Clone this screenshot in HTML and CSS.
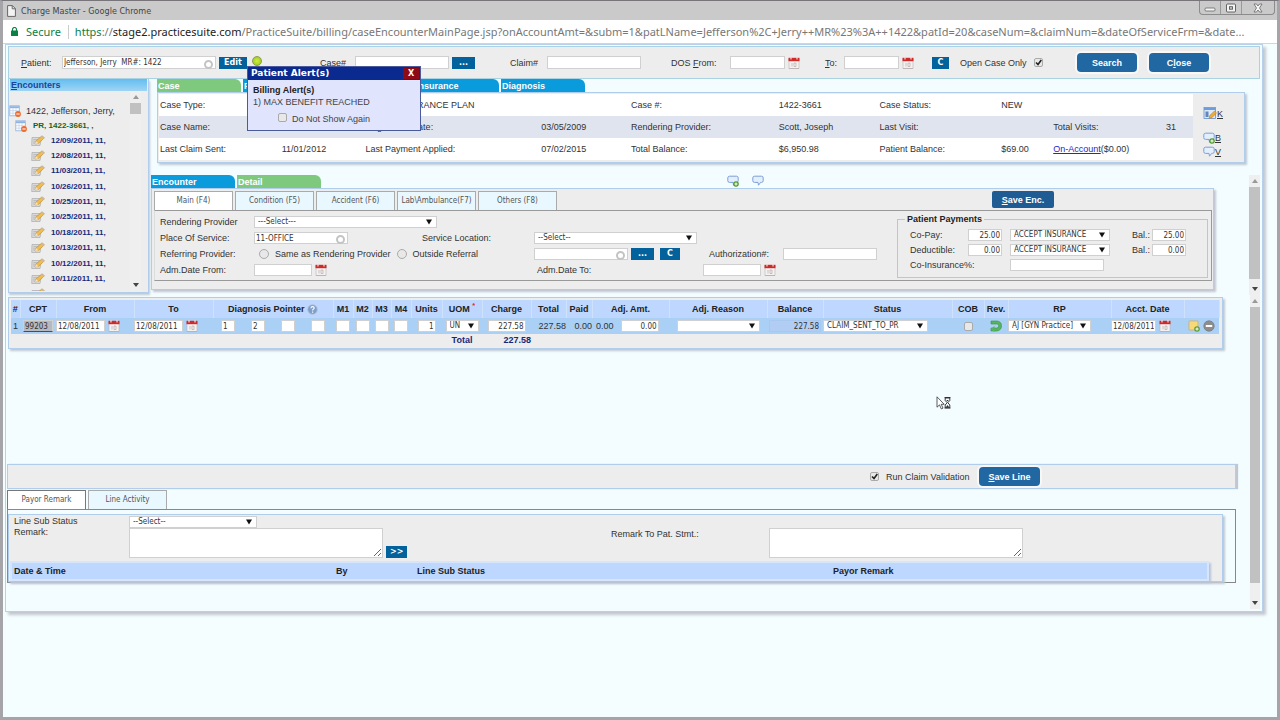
FILE: index.html
```html
<!DOCTYPE html>
<html lang="en">
<head>
  <meta charset="UTF-8">
  <title>Charge Master</title>
  <meta name="viewport" content="width=device-width, initial-scale=1.0">
  <link rel="stylesheet" href="styles.css">
</head>
<body>
  <!-- shared icons -->
  <svg class="defs" width="0" height="0" aria-hidden="true">
    <symbol id="cal" viewBox="0 0 12 12">
      <rect x="1" y="2" width="10" height="9.5" fill="#f4f1f1" stroke="#b9b3b3" stroke-width=".6"/>
      <rect x=".5" y=".8" width="11" height="3.4" fill="#cf2a2a"/>
      <path d="M3 0v2.4M9 0v2.4" stroke="#f3dede" stroke-width="1.2"/>
      <path d="M4 6v3.5M6 6h2v3.5H6zM1 11.5h10" stroke="#b7a9a9" stroke-width=".7" fill="none"/>
    </symbol>
    <symbol id="note" viewBox="0 0 14 12">
      <path d="M1 2.5h9.5L9 10.5H.7z" fill="#d9d9d9" stroke="#aaa" stroke-width=".7"/>
      <path d="M2.5 4.5h5M2.2 6.2h4M2 8h3" stroke="#aaa" stroke-width=".6"/>
      <path d="M4 9l1-3L11 .8l2.4 2L7.4 8.4z" fill="#f0bd4e" stroke="#b98b35" stroke-width=".6"/>
      <path d="M4 9l1-3 2.4 2.4z" fill="#f8e3bc"/>
      <path d="M11 .8l2.4 2-.9.9-2.5-2z" fill="#c9b9ae"/>
    </symbol>
    <symbol id="sheet" viewBox="0 0 12 12">
      <rect x=".8" y=".8" width="9.5" height="10" fill="#fdfeff" stroke="#8fb0da" stroke-width=".8"/>
      <path d="M1 2.2h9" stroke="#8db3e6" stroke-width="2"/>
      <path d="M4 3v8M7 3v8M1 5.6h9M1 8.2h9" stroke="#b8cbe4" stroke-width=".6"/>
      <circle cx="9" cy="9" r="2.9" fill="#ee6b2d"/>
      <path d="M7.4 9h3.2" stroke="#fff" stroke-width="1.1"/>
    </symbol>
    <symbol id="bubble" viewBox="0 0 12 12">
      <path d="M2.5 1.2h7q1.7 0 1.7 1.7v2.8q0 1.7-1.7 1.7H8.600L6.500 10.200 6 7.400H2.500Q.8 7.400.8 5.700V2.900q0-1.700 1.700-1.700z" fill="#e3effc" stroke="#7d9fd6" stroke-width="1"/>
    </symbol>
    <symbol id="bubble-add" viewBox="0 0 12 12">
      <use href="#bubble"/>
      <circle cx="9" cy="9" r="2.8" fill="#4f9a2c"/>
      <path d="M9 7.4v3.2M7.4 9h3.2" stroke="#fff" stroke-width="1"/>
    </symbol>
    <symbol id="edit-sheet" viewBox="0 0 14 14">
      <rect x="1" y="1.5" width="11.5" height="11" fill="#dbe9fa" stroke="#668fc7" stroke-width=".8"/>
      <path d="M1 3h11.5" stroke="#6f9ddb" stroke-width="2"/>
      <path d="M2.5 5.5h3v5.5h-3z" fill="#6086be"/>
      <path d="M6 12.5l.8-3L11.500 5l2 2-4.600 4.700z" fill="#f1ac3b" stroke="#a87321" stroke-width=".5"/>
    </symbol>
  </svg>

  <header class="titlebar">
    <svg width="9" height="12" viewBox="0 0 9 12"><path d="M.6.6h4.8l3 3v7.8H.6z" fill="#f3f3f3" stroke="#666"/><path d="M5.2.6v3.2h3.2" fill="none" stroke="#666"/></svg>
    <span>Charge Master - Google Chrome</span>
    <div class="win-btns">
      <button aria-label="Minimize"><svg width="12" height="10" viewBox="0 0 12 10"><rect x="1" y="5" width="10" height="3" rx="1" fill="#f5f5f5" stroke="#666" stroke-width=".8"/></svg></button>
      <button aria-label="Maximize"><svg width="12" height="10" viewBox="0 0 12 10"><rect x="1.5" y="1" width="9" height="8" rx="1" fill="#f5f5f5" stroke="#555" stroke-width=".9"/><rect x="4.5" y="3.7" width="3" height="2.5" fill="#ccc" stroke="#555" stroke-width=".9"/></svg></button>
      <button aria-label="Close window"><svg width="12" height="10" viewBox="0 0 12 10"><path d="M2 1h2.500L6 3l1.500-2H10L7.500 5 10 9H7.500L6 7 4.500 9H2l2.500-4z" fill="#f5f5f5" stroke="#666" stroke-width=".8"/></svg></button>
    </div>
  </header>

  <div class="address">
    <svg width="7" height="9" viewBox="0 0 7 9"><rect x="0" y="3.500" width="7" height="5.500" rx=".5" fill="#0b8043"/><path d="M1.500 4V2.500a2 2 0 0 1 4 0V4" fill="none" stroke="#0b8043" stroke-width="1.200"/></svg>
    <span class="secure">Secure</span>
    <span class="url"><i class="https">https</i>://<b>stage2.practicesuite.com</b>/PracticeSuite/billing/caseEncounterMainPage.jsp?onAccountAmt=&amp;subm=1&amp;patLName=Jefferson%2C+Jerry++MR%23%3A++1422&amp;patId=20&amp;caseNum=&amp;claimNum=&amp;dateOfServiceFrm=&amp;date...</span>
  </div>

  <main class="app">
    <form class="topbar">
      <div class="group">
        <label class="w38" for="patient"><u>P</u>atient:</label>
        <span class="lookup"><input id="patient" class="w154" value="Jefferson, Jerry  MR#: 1422"></span>
        <button type="button" class="mini">Edit</button>
        <span class="dot"></span>
      </div>
      <div class="group">
        <label class="w32" for="caseno">Case#</label>
        <input id="caseno" class="w94">
        <button type="button" class="mini">...</button>
      </div>
      <div class="group">
        <label class="w34" for="claimno">Claim#</label>
        <input id="claimno" class="w94">
      </div>
      <div class="group">
        <label class="w56" for="dosfrom">DOS <u>F</u>rom:</label>
        <input id="dosfrom" class="w55">
        <svg class="cal"><use href="#cal"/></svg>
      </div>
      <div class="group">
        <label class="w16" for="dosto"><u>T</u>o:</label>
        <input id="dosto" class="w55">
        <svg class="cal"><use href="#cal"/></svg>
      </div>
      <div class="group">
        <button type="button" class="mini short">C</button>
        <label class="open-case" for="opencase">Open Case Only</label>
        <input type="checkbox" id="opencase" checked>
      </div>
      <div class="group buttons">
        <button type="button" class="btn">Search</button>
        <button type="button" class="btn">C<u>l</u>ose</button>
      </div>
    </form>

    <div class="workspace">
      <aside class="sidebar">
        <h2><u>E</u>ncounters</h2>
        <div class="tree-wrap">
          <div class="tree">
            <div class="patient"><svg class="sheet"><use href="#sheet"/></svg>1422, Jefferson, Jerry,</div>
            <div class="case"><svg class="sheet"><use href="#sheet"/></svg>PR, 1422-3661, ,</div>
            <ul>
              <li><svg><use href="#note"/></svg><a href="#">12/09/2011, 11,</a></li>
              <li><svg><use href="#note"/></svg><a href="#">12/08/2011, 11,</a></li>
              <li><svg><use href="#note"/></svg><a href="#">11/03/2011, 11,</a></li>
              <li><svg><use href="#note"/></svg><a href="#">10/26/2011, 11,</a></li>
              <li><svg><use href="#note"/></svg><a href="#">10/25/2011, 11,</a></li>
              <li><svg><use href="#note"/></svg><a href="#">10/25/2011, 11,</a></li>
              <li><svg><use href="#note"/></svg><a href="#">10/18/2011, 11,</a></li>
              <li><svg><use href="#note"/></svg><a href="#">10/13/2011, 11,</a></li>
              <li><svg><use href="#note"/></svg><a href="#">10/12/2011, 11,</a></li>
              <li><svg><use href="#note"/></svg><a href="#">10/11/2011, 11,</a></li>
              <li><svg><use href="#note"/></svg></li>
            </ul>
          </div>
          <div class="scroll"><i class="up"></i><i class="thumb"></i><i class="down"></i></div>
        </div>
      </aside>

      <div class="main">
        <section class="case-zone">
          <nav class="tabs">
            <a href="#" class="on">Case</a>
            <a href="#">Patient</a>
            <a href="#">Guarantor</a>
            <a href="#">Insurance</a>
            <a href="#">Diagnosis</a>
          </nav>
          <div class="panel case-panel">
            <table class="case-table">
              <colgroup><col class="w122"><col class="w84"><col class="w176"><col class="w90"><col class="w148"><col class="w101"><col class="w122"><col class="w52"><col class="w113"><col class="w28"></colgroup>
              <tr><th>Case Type:</th><td></td><td colspan="2" class="plan">INSURANCE PLAN</td><th>Case #:</th><td>1422-3661</td><th>Case Status:</th><td>NEW</td><th></th><td></td></tr>
              <tr><th>Case Name:</th><td></td><th>Registered Date:</th><td>03/05/2009</td><th>Rendering Provider:</th><td>Scott, Joseph</td><th>Last Visit:</th><td></td><th>Total Visits:</th><td>31</td></tr>
              <tr><th>Last Claim Sent:</th><td>11/01/2012</td><th>Last Payment Applied:</th><td>07/02/2015</td><th>Total Balance:</th><td>$6,950.98</td><th>Patient Balance:</th><td>$69.00</td><td colspan="2"><a href="#">On-Account</a>($0.00)</td></tr>
            </table>
            <div class="case-icons">
              <a href="#"><svg width="14" height="14"><use href="#edit-sheet"/></svg><u>K</u></a>
              <a href="#"><svg width="12" height="12"><use href="#bubble-add"/></svg><u>B</u></a>
              <a href="#"><svg width="12" height="12"><use href="#bubble"/></svg><u>V</u></a>
            </div>
          </div>
        </section>

        <section class="enc-zone">
          <div class="enc-body">
            <nav class="tabs">
              <a href="#">Encounter</a>
              <a href="#" class="on">Detail</a>
              <span class="tab-icons">
                <svg width="12" height="12"><use href="#bubble-add"/></svg>
                <svg width="12" height="12"><use href="#bubble"/></svg>
              </span>
            </nav>
            <div class="panel enc-panel">
              <div class="enc-head">
                <nav class="subtabs">
                  <a href="#" class="on">Main (F4)</a>
                  <a href="#">Condition (F5)</a>
                  <a href="#">Accident (F6)</a>
                  <a href="#">Lab\Ambulance(F7)</a>
                  <a href="#">Others (F8)</a>
                </nav>
                <button type="button" class="btn save-enc"><u>S</u>ave Enc.</button>
              </div>
              <form class="enc-form">
                <div class="fields">
                  <label for="rendprov">Rendering Provider</label>
                  <select id="rendprov" class="w183 wide"><option>---Select---</option></select>

                  <label for="pos">Place Of Service:</label>
                  <span class="lookup"><input id="pos" class="w94" value="11-OFFICE"></span>
                  <label for="svcloc">Service Location:</label>
                  <select id="svcloc" class="w163 wide"><option>--Select--</option></select>

                  <span>Referring Provider:</span>
                  <span class="radios">
                    <input type="radio" name="ref" id="refsame"><label for="refsame">Same as Rendering Provider</label>
                    <input type="radio" name="ref" id="refout"><label for="refout">Outside Referral</label>
                  </span>
                  <span class="group">
                    <span class="lookup"><input class="w94" aria-label="Referring provider name"></span>
                    <button type="button" class="mini">...</button>
                    <button type="button" class="mini short">C</button>
                  </span>
                  <label for="auth">Authorization#:</label>
                  <input id="auth" class="w94">

                  <label for="admfrom">Adm.Date From:</label>
                  <span class="group"><input id="admfrom" class="w58"><svg class="cal"><use href="#cal"/></svg></span>
                  <span class="group adm-to"><label for="admto">Adm.Date To:</label><input id="admto" class="w58"><svg class="cal"><use href="#cal"/></svg></span>
                </div>
                <fieldset>
                  <legend>Patient Payments</legend>
                  <div class="payments">
                    <label for="copay">Co-Pay:</label>
                    <input id="copay" class="num w34" value="25.00">
                    <select class="w100" aria-label="Co-pay payer"><option>ACCEPT INSURANCE</option></select>
                    <label for="copaybal">Bal.:</label>
                    <input id="copaybal" class="num w34" value="25.00">
                    <label for="deduct">Deductible:</label>
                    <input id="deduct" class="num w34" value="0.00">
                    <select class="w100" aria-label="Deductible payer"><option>ACCEPT INSURANCE</option></select>
                    <label for="dedbal">Bal.:</label>
                    <input id="dedbal" class="num w34" value="0.00">
                    <label for="coins" class="coins">Co-Insurance%:</label>
                    <input id="coins" class="w94">
                  </div>
                </fieldset>
              </form>
            </div>
          </div>
          <div class="scroll"><i class="up"></i><i class="thumb fill"></i><i class="down"></i></div>
        </section>
      </div>
    </div>

    <div class="lower">
      <div class="lower-body">
        <div class="panel lines-panel">
          <table class="lines">
            <colgroup><col class="w9"><col class="w36"><col class="w78"><col class="w79"><col class="w30"><col class="w30"><col class="w30"><col class="w30"><col class="w20"><col class="w19"><col class="w19"><col class="w20"><col class="w31"><col class="w40"><col class="w49"><col class="w35"><col class="w26"><col class="w77"><col class="w98"><col class="w56"><col class="w129"><col class="w32"><col class="w24"><col class="w103"><col class="w73"><col class="w35"></colgroup>
            <thead>
              <tr>
                <th>#</th><th>CPT</th><th>From</th><th>To</th>
                <th colspan="4">Diagnosis Pointer <svg class="help" viewBox="0 0 12 12"><circle cx="6" cy="6" r="5.300" fill="#7f9fcb" stroke="#b5c6df"/><path d="M4.300 4.700q0-1.800 1.800-1.800t1.700 1.500q0 .9-1 1.400-.7.400-.7 1.200M6.100 8.300v1.200" fill="none" stroke="#fff" stroke-width="1.200"/></svg></th>
                <th>M1</th><th>M2</th><th>M3</th><th>M4</th><th>Units</th><th>UOM <sup>*</sup></th><th>Charge</th><th>Total</th><th>Paid</th><th>Adj. Amt.</th><th>Adj. Reason</th><th>Balance</th><th>Status</th><th>COB</th><th>Rev.</th><th>RP</th><th>Acct. Date</th><th></th>
              </tr>
            </thead>
            <tbody>
              <tr>
                <td>1</td>
                <td><input class="cpt" value="99203" aria-label="CPT"></td>
                <td><span class="group"><input class="w49" value="12/08/2011" aria-label="From"><svg class="cal"><use href="#cal"/></svg></span></td>
                <td><span class="group"><input class="w49" value="12/08/2011" aria-label="To"><svg class="cal"><use href="#cal"/></svg></span></td>
                <td><input class="w14" value="1" aria-label="Pointer 1"></td>
                <td><input class="w14" value="2" aria-label="Pointer 2"></td>
                <td><input class="w14" aria-label="Pointer 3"></td>
                <td><input class="w14" aria-label="Pointer 4"></td>
                <td><input class="w14" aria-label="M1"></td>
                <td><input class="w14" aria-label="M2"></td>
                <td><input class="w14" aria-label="M3"></td>
                <td><input class="w14" aria-label="M4"></td>
                <td><input class="w18 num" value="1" aria-label="Units"></td>
                <td><select class="w33" aria-label="UOM"><option>UN</option></select></td>
                <td><input class="w38 num" value="227.58" aria-label="Charge"></td>
                <td class="right">227.58</td>
                <td class="right">0.00</td>
                <td><span class="adj">0.00<input class="w38 num" value="0.00" aria-label="Adjustment amount"></span></td>
                <td><select class="w83" aria-label="Adjustment reason"><option></option></select></td>
                <td><input class="balance num" value="227.58" aria-label="Balance" readonly></td>
                <td class="left"><select class="w105" aria-label="Status"><option>CLAIM_SENT_TO_PR</option></select></td>
                <td><input type="checkbox" aria-label="COB"></td>
                <td><svg class="rev" viewBox="0 0 12 12"><path d="M1 1h6q4.500.5 4.500 4.800T7 11H1V8h6q1.800-.2 1.800-2.200T7 4H1z" fill="#57b560" stroke="#358f42" stroke-width=".6"/><path d="M4.500 6L.5 9.300l4 2.400z" fill="#57b560"/></svg></td>
                <td class="left"><select class="w83" aria-label="RP"><option>AJ [GYN Practice]</option></select></td>
                <td><span class="group acct"><input class="w45" value="12/08/2011" aria-label="Account date"><svg class="cal"><use href="#cal"/></svg></span></td>
                <td><span class="group row-icons">
                  <svg width="12" height="12" viewBox="0 0 12 12"><path d="M1 1h9v9H1z" fill="#f9d878" stroke="#dba93f" stroke-width=".7"/><circle cx="9" cy="9" r="2.800" fill="#5f9c35"/><path d="M9 7.400v3.200M7.400 9h3.200" stroke="#fff"/></svg>
                  <svg width="12" height="12" viewBox="0 0 12 12"><circle cx="6" cy="6" r="5.200" fill="#8d8d8d" stroke="#777" stroke-width=".7"/><path d="M2.800 6h6.400" stroke="#fff" stroke-width="2"/></svg>
                </span></td>
              </tr>
            </tbody>
            <tfoot>
              <tr><td colspan="13"></td><td>Total</td><td class="right">227.58</td><td colspan="11"></td></tr>
            </tfoot>
          </table>
        </div>

        <div class="action-bar">
          <input type="checkbox" id="validate" checked>
          <label for="validate">Run Claim Validation</label>
          <button type="button" class="btn"><u>S</u>ave Line</button>
        </div>

        <nav class="subtabs remark-tabs">
          <a href="#" class="on">Payor Remark</a>
          <a href="#">Line Activity</a>
        </nav>
        <div class="remark-frame">
          <div class="panel remark-panel">
            <form class="remark-form">
              <div class="labels"><label for="substatus">Line Sub Status</label><label for="remark">Remark:</label></div>
              <div class="remark-fields">
                <select id="substatus" class="w128"><option>--Select--</option></select>
                <div class="remark-row"><textarea id="remark"></textarea><button type="button" class="mini short">&gt;&gt;</button></div>
              </div>
              <label class="stmt" for="stmt">Remark To Pat. Stmt.:</label>
              <textarea id="stmt" class="stmt"></textarea>
            </form>
            <table class="history">
              <colgroup><col class="w323"><col class="w81"><col class="w416"><col></colgroup>
              <tr><th>Date &amp; Time</th><th>By</th><th>Line Sub Status</th><th>Payor Remark</th></tr>
            </table>
          </div>
        </div>
      </div>
      <div class="scroll"><i class="up"></i><i class="thumb fill"></i><i class="down"></i></div>
    </div>
  </main>

  <div class="alert" role="dialog" aria-label="Patient Alert(s)">
    <div class="alert-title">Patient Alert(s)<button aria-label="Close alert">X</button></div>
    <div class="alert-body">
      <strong>Billing Alert(s)</strong>
      <p>1) MAX BENEFIT REACHED</p>
      <div class="again"><input type="checkbox" id="again"><label for="again">Do Not Show Again</label></div>
    </div>
  </div>

  <svg class="cursor" viewBox="0 0 16 14"><path d="M1 .8v10.400l2.500-2.300 1.800 4 1.700-.8-1.800-3.800h3z" fill="#fff" stroke="#333" stroke-width=".8"/><path d="M8.500 1.500h6M8.500 12h6M9.200 2v2.500l2 2.200-2 2.300v2.700h4.600V9l-2-2.300 2-2.200V2z" fill="#fff" stroke="#222" stroke-width=".9"/><path d="M10.200 4h2.600l-1.300 1.600zM10 11l1.500-2 1.500 2z" fill="#333"/></svg>
</body>
</html>
```

FILE: styles.css
```css
* {
  box-sizing: border-box;
}

body {
  margin: 0;
  min-height: 100vh;
  position: relative;
  font: 9px/12px "Liberation Sans", Arial, sans-serif;
  color: #333;
  background: #f5feff;
  border: 3px solid #a5a4a8;
  border-top: 1px solid #77747a;
}

.defs {
  position: absolute;
}

svg {
  flex: none;
}

button, input, select, textarea {
  font: 8px/10px "DejaVu Sans Condensed", "DejaVu Sans", Tahoma, sans-serif;
  color: #333;
  margin: 0;
  border-radius: 0;
}

/* browser window */
.titlebar {
  display: flex;
  align-items: center;
  gap: 5px;
  height: 19px;
  padding-left: 4px;
  background: #cacaca;
  font: 9px/18px "DejaVu Sans Condensed", "DejaVu Sans", Tahoma, sans-serif;
  color: #444;
}

.win-btns {
  display: flex;
  align-self: flex-start;
  margin-left: auto;
  margin-right: 2px;
  border: 1px solid #8b8b8b;
  border-top: 0;
  border-radius: 0 0 4px 4px;
}

.win-btns button {
  display: flex;
  align-items: center;
  justify-content: center;
  width: 21px;
  height: 13px;
  padding: 0;
  border: 0;
  border-right: 1px solid #999;
  background: none;
}

.win-btns button:last-child {
  width: 32px;
  border: 0;
}

.address {
  display: flex;
  align-items: center;
  height: 24px;
  padding-left: 8px;
  background: #fff;
  border-bottom: 1px solid #cfd6da;
  font: 11px/22px "Noto Sans", Tahoma, sans-serif;
  color: #777;
  white-space: nowrap;
  overflow: hidden;
}

.secure {
  margin-left: 8px;
  padding-right: 7px;
  border-right: 1px solid #ccc;
  line-height: 14px;
  color: #0b8043;
}

.url {
  margin-left: 6px;
}

.url b {
  font-weight: normal;
  color: #222;
}

.https {
  font-style: normal;
  color: #0b8043;
}

/* page shell */
.app {
  margin: 0 14px 0 2px;
  background: #f3fdff;
  border: 1px solid #b9d0ea;
  box-shadow: 3px 3px 3px #c2c6cf;
}

.topbar {
  display: grid;
  grid-template-columns: 299px 190px 161px 154px 107px 145px 1fr;
  align-items: center;
  height: 33px;
  margin: 1px 2px 0;
  padding-left: 12px;
  background: #ededed;
  border: 1px solid #a9d2e2;
}

.group {
  display: flex;
  align-items: center;
  gap: 3px;
}

.buttons {
  gap: 12px;
}

.open-case {
  margin: 0 4px 0 8px;
}

input, select, textarea {
  border: 1px solid #d0d0d0;
  background: #fff;
  padding: 0 1px;
}

input, select {
  height: 12px;
}

.topbar input {
  height: 13px;
}

select {
  appearance: none;
  padding: 0 3px;
  background: #fff url("data:image/svg+xml,%3Csvg xmlns='http://www.w3.org/2000/svg' width='6' height='6'%3E%3Cpath d='M0 .5h6L3 5.500z' fill='%23111'/%3E%3C/svg%3E") no-repeat right 4px center;
}

input[type="checkbox"], input[type="radio"] {
  appearance: none;
  width: 9px;
  height: 9px;
  padding: 0;
  border: 1px solid #aaa;
  border-radius: 2px;
  background: #e8e8e8;
}

input[type="checkbox"]:checked {
  background: #e8e8e8 url("data:image/svg+xml,%3Csvg xmlns='http://www.w3.org/2000/svg' width='7' height='7'%3E%3Cpath d='M1 3.500l2 2L6.300 1' fill='none' stroke='%23222' stroke-width='1.600'/%3E%3C/svg%3E") no-repeat center;
}

input[type="radio"] {
  width: 10px;
  height: 10px;
  border-radius: 50%;
}

.num {
  text-align: right;
}

.lookup {
  position: relative;
  display: flex;
  justify-self: start;
}

.lookup::after {
  content: "";
  box-sizing: border-box;
  position: absolute;
  right: 3px;
  bottom: 0;
  width: 9px;
  height: 9px;
  border: 2px solid #c4c4c4;
  border-radius: 50%;
}

.mini {
  height: 12px;
  min-width: 23px;
  padding: 0 5px;
  border: 0;
  background: #03619b;
  color: #fff;
  font: bold 8px/10px "DejaVu Sans", Verdana, sans-serif;
}

.mini.short {
  min-width: 20px;
  padding: 0 4px;
}

.topbar .short {
  min-width: 17px;
}

.btn {
  min-width: 60px;
  height: 19px;
  padding: 0 9px;
  border: 0;
  border-radius: 4px;
  background: #2168a2;
  color: #fff;
  font: bold 9px/12px "Liberation Sans", Arial, sans-serif;
  box-shadow: 0 0 0 2px #f8f8f8;
}

.dot {
  align-self: flex-start;
  width: 10px;
  height: 10px;
  margin-left: 2px;
  border: 1px solid #8c9c4c;
  border-radius: 50%;
  background: radial-gradient(#d8ec3c, #8dc41f);
}

.cal {
  width: 12px;
  height: 12px;
}

.panel {
  background: #ededed;
  border: 1px solid #b0cdec;
  box-shadow: 2px 2px 2px #c0c6d2;
}

/* fake scrollbars */
.scroll {
  display: flex;
  flex-direction: column;
  align-items: center;
  width: 11px;
  background: #efefef;
}

.scroll .up, .scroll .down {
  flex: none;
  margin: 4px 0;
  border: 3px solid transparent;
  border-top-width: 0;
  border-bottom: 4px solid #999;
}

.scroll .down {
  margin-top: auto;
  border-top: 4px solid #444;
  border-bottom-width: 0;
}

.thumb {
  width: 100%;
  height: 11px;
  background: #c1c1c1;
}

.thumb.fill {
  flex: 1;
  margin-bottom: 8px;
}

.lower .thumb.fill {
  margin-bottom: 18px;
}

/* encounter tree */
.workspace {
  display: flex;
  gap: 2px;
  padding-left: 2px;
}

.sidebar {
  width: 141px;
  height: 214px;
  overflow: hidden;
  background: #ededed;
  border: 1px solid #b0cdec;
  border-top: 0;
  box-shadow: 1px 2px 2px #c0c6d2;
}

.sidebar h2 {
  margin: 0 1px;
  padding-left: 1px;
  font-size: 9px;
  line-height: 12px;
  color: #17459b;
  background: linear-gradient(#63bdf0, #9fd4f5);
}

.tree-wrap {
  display: flex;
  justify-content: space-between;
  height: 200px;
  padding-right: 7px;
  overflow: hidden;
}

.tree {
  padding-top: 12px;
}

.patient, .case {
  display: flex;
  align-items: center;
  gap: 5px;
  height: 15px;
  white-space: nowrap;
}

.case {
  gap: 6px;
  padding-left: 6px;
  font-weight: bold;
  font-size: 8px;
  color: #15641c;
}

.sheet {
  width: 12px;
  height: 12px;
}

.tree ul {
  display: grid;
  grid-auto-rows: 1fr;
  height: 169px;
  margin: 0;
  padding: 0 0 0 22px;
  list-style: none;
}

.tree li {
  display: flex;
  align-items: center;
  gap: 6px;
}

.tree li svg {
  width: 14px;
  height: 12px;
}

.tree a {
  font-size: 8px;
  font-weight: bold;
  color: #15297c;
  text-decoration: none;
}

/* case summary */
.main {
  flex: 1;
}

.case-zone {
  margin: 0 17px 12px 6px;
}

.tabs {
  display: flex;
  gap: 2px;
  height: 13px;
}

.tabs a {
  width: 84px;
  padding: 1px 1px 0;
  border-radius: 0 6px 0 0;
  background: #0a9bdc;
  color: #fff;
  font-weight: bold;
  text-decoration: none;
}

.tabs .on {
  background: #7fc97f;
}

.tab-icons {
  display: flex;
  gap: 13px;
  margin-left: 404px;
}

.case-panel {
  display: flex;
  padding: 1px 0 2px 1px;
}

.case-table {
  flex: 1;
  table-layout: fixed;
  border-collapse: collapse;
  background: #fff;
}

.case-table tr {
  height: 22px;
}

.case-table tr:nth-child(2) {
  background: #e0e4ee;
}

.case-table th, .case-table td {
  padding: 0 1px;
  font-weight: normal;
  text-align: left;
  white-space: nowrap;
}

.case-table td.plan {
  padding-left: 31px;
}

.case-table a {
  color: #2626c8;
}

.case-icons {
  width: 51px;
  padding: 12px 0 0 10px;
}

.case-icons a {
  display: flex;
  align-items: flex-end;
  color: #333;
  text-decoration: none;
}

.case-icons a:first-child {
  margin-bottom: 12px;
}

.case-icons a:nth-child(2) {
  margin-bottom: 2px;
}

/* encounter detail */
.enc-zone {
  display: flex;
  padding-right: 2px;
}

.enc-body {
  flex: 1;
  margin-right: 35px;
  padding-bottom: 5px;
}

.enc-panel {
  padding: 2px 1px 8px 2px;
}

.enc-head {
  display: flex;
  justify-content: space-between;
}

.subtabs {
  display: flex;
  gap: 2px;
}

.subtabs a {
  width: 79px;
  height: 19px;
  border: 1px solid #aaa;
  border-bottom: 0;
  background: #e9f8ff;
  color: #555;
  font: 8px/17px "DejaVu Sans Condensed", "DejaVu Sans", Tahoma, sans-serif;
  text-align: center;
  text-decoration: none;
}

.subtabs .on {
  background: #fff;
}

.save-enc {
  width: 62px;
  height: 17px;
  margin-right: 158px;
  border-radius: 2px;
  background: #1f5c93;
  box-shadow: none;
}

.enc-form {
  display: flex;
  justify-content: space-between;
  border: 1px solid #999;
  border-left-color: #ddd;
  padding: 3px 3px 2px 5px;
}

.fields {
  display: grid;
  grid-template-columns: 94px 168px 112px 175px 74px 94px;
  grid-template-rows: repeat(4, 16px);
  align-items: center;
}

.fields .wide {
  grid-column: span 5;
}

.fields #svcloc {
  grid-column: span 3;
}

.radios {
  grid-column: span 2;
  display: flex;
  align-items: center;
  gap: 6px;
  padding-left: 5px;
}

.fields .group .short {
  margin-left: 3px;
}

.adm-to {
  grid-column: 4 / span 3;
}

.adm-to label {
  width: 166px;
  padding-left: 3px;
}

fieldset {
  width: 311px;
  margin: 0;
  padding: 5px 12px 0;
  border: 1px solid #a5cfdf;
}

legend {
  padding: 0 2px;
  margin-left: -5px;
  font-weight: bold;
  line-height: 10px;
  color: #222;
}

.payments {
  display: grid;
  grid-template-columns: 56px 40px 106px 32px 34px;
  column-gap: 2px;
  row-gap: 3px;
  align-items: center;
}

.payments label {
  white-space: nowrap;
}

.payments .coins {
  grid-column: span 2;
}

.payments select + label {
  justify-self: end;
}

/* charge lines */
.lower {
  display: flex;
  padding: 0 2px 2px 1px;
}

.lower-body {
  flex: 1;
  margin-right: 14px;
  padding-bottom: 26px;
}

.lines-panel {
  margin: 2px 13px 115px 1px;
  padding: 2px;
}

.lines {
  width: 100%;
  table-layout: fixed;
  border-collapse: collapse;
}

.lines th, .lines td {
  padding: 0;
  text-align: center;
  white-space: nowrap;
}

.lines th {
  height: 18px;
  background: #bdd7ff;
  border-right: 1px solid #cfe2fb;
  color: #222;
}

.lines tbody td {
  height: 16px;
  background: #abd0f5;
}

.lines tfoot {
  font-weight: bold;
  color: #15297c;
}

.lines .right {
  text-align: right;
}

.lines .left {
  text-align: left;
}

.lines input, .lines select {
  vertical-align: middle;
}

.lines sup {
  color: #e22;
  line-height: 0;
}

.help {
  width: 11px;
  height: 11px;
  vertical-align: middle;
}

.rev {
  width: 12px;
  height: 12px;
  vertical-align: middle;
}

.lines .cpt {
  width: 30px;
  background: #b5b9c2;
  border-bottom-color: #2a49b5;
}

.lines .balance {
  width: 52px;
  background: #b2cdf3;
  border-color: #a8c8f0;
}

.adj {
  display: flex;
  align-items: center;
  gap: 7px;
  padding-left: 4px;
}

.row-icons {
  justify-content: center;
}

.action-bar {
  display: flex;
  align-items: center;
  justify-content: flex-end;
  gap: 7px;
  height: 25px;
  padding-right: 195px;
  background: #ededed;
  border: 1px solid #b0cdec;
  box-shadow: 2px 0 1px #c0c6d2;
}

.action-bar .btn {
  margin-left: 3px;
}

.remark-tabs {
  padding-top: 1px;
}

.remark-tabs .on {
  border-color: #777;
}

.remark-frame {
  padding: 4px 12px 0 0;
  border: 1px solid #888;
}

.remark-form {
  display: grid;
  grid-template-columns: 115px 482px 158px 254px;
  padding: 1px 0 3px 5px;
}

.labels {
  display: flex;
  flex-direction: column;
  line-height: 11px;
}

.remark-row {
  display: flex;
  align-items: flex-end;
  gap: 3px;
}

textarea {
  display: block;
  width: 254px;
  height: 30px;
}

.remark-fields select {
  display: block;
}

.stmt {
  margin-top: 12px;
}

.history {
  width: calc(100% - 14px);
  margin-left: 1px;
  table-layout: fixed;
  border-collapse: collapse;
  background: #bdd7ff;
  border: 2px solid #d5e6fb;
  box-shadow: 2px 2px 2px #b9c3d6;
}

.history th {
  height: 18px;
  padding: 0 2px;
  text-align: left;
  color: #222;
}

/* patient alert popup */
.alert {
  position: absolute;
  top: 65px;
  left: 244px;
  width: 174px;
  background: #e0e4fd;
  border: 1px solid #4a5a9c;
}

.alert-title {
  display: flex;
  justify-content: space-between;
  padding: 0 1px 0 3px;
  background: #0b2a8f;
  color: #fff;
  font: bold 9px/13px "DejaVu Sans", Verdana, sans-serif;
}

.alert-title button {
  width: 16px;
  height: 11px;
  margin-top: 1px;
  padding: 0;
  border: 0;
  background: #8e0b16;
  color: #fff;
  font: bold 8px/10px "DejaVu Sans", Verdana, sans-serif;
}

.alert-body {
  padding: 4px 5px 5px;
  color: #222;
}

.alert-body p {
  margin: 0 0 5px;
  color: #444;
}

.again {
  display: flex;
  gap: 5px;
  padding-left: 25px;
  color: #444;
}

.cursor {
  position: absolute;
  top: 395px;
  left: 933px;
  width: 16px;
  height: 14px;
}

/* widths */
.w9 { width: 9px; }
.w14 { width: 14px; }
.w16 { width: 16px; }
.w18 { width: 18px; }
.w19 { width: 19px; }
.w20 { width: 20px; }
.w24 { width: 24px; }
.w26 { width: 26px; }
.w28 { width: 28px; }
.w30 { width: 30px; }
.w31 { width: 31px; }
.w32 { width: 32px; }
.w33 { width: 33px; }
.w34 { width: 34px; }
.w35 { width: 35px; }
.w36 { width: 36px; }
.w38 { width: 38px; }
.w40 { width: 40px; }
.w45 { width: 45px; }
.w49 { width: 49px; }
.w52 { width: 52px; }
.w55 { width: 55px; }
.w56 { width: 56px; }
.w58 { width: 58px; }
.w73 { width: 73px; }
.w77 { width: 77px; }
.w78 { width: 78px; }
.w79 { width: 79px; }
.w81 { width: 81px; }
.w83 { width: 83px; }
.w84 { width: 84px; }
.w90 { width: 90px; }
.w94 { width: 94px; }
.w98 { width: 98px; }
.w100 { width: 100px; }
.w101 { width: 101px; }
.w103 { width: 103px; }
.w105 { width: 105px; }
.w113 { width: 113px; }
.w122 { width: 122px; }
.w128 { width: 128px; }
.w129 { width: 129px; }
.w148 { width: 148px; }
.w154 { width: 154px; }
.w163 { width: 163px; }
.w176 { width: 176px; }
.w183 { width: 183px; }
.w323 { width: 323px; }
.w416 { width: 416px; }
```
